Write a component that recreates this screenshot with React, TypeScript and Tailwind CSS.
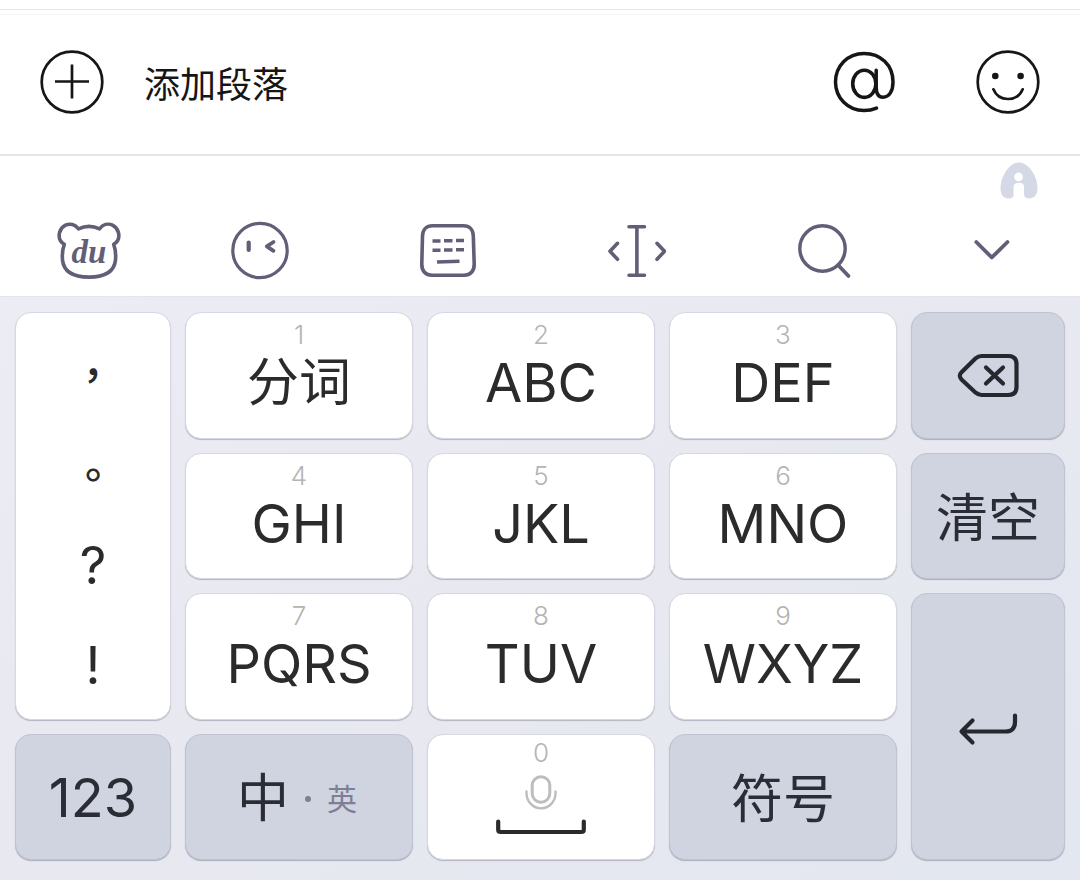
import React from 'react';

interface LetterKeyProps {
  digit: string;
  label: string;
}

const keyBase = 'rounded-2xl border';
const lightKey = `${keyBase} border-[#d6d7e0] shadow-[0_1px_1px_#b4b5c0] bg-white text-[#2b2b2b]`;
const darkKey = `${keyBase} border-[#c0c3d0] shadow-[0_1px_1px_#a9acba] bg-[#d0d3e0] text-[#2a2d35] flex items-center justify-center`;

const LetterKey = ({ digit, label }: LetterKeyProps) => (
  <button className={`${lightKey} flex flex-col items-center pt-2`}>
    <span className="text-[26px] leading-7 font-light text-[#b4b4b4]">{digit}</span>
    <span className="mt-0.5 text-[54px] leading-16">{label}</span>
  </button>
);

const PlusIcon = () => (
  <svg width="64" height="64" viewBox="0 0 64 64" fill="none" stroke="#161616" strokeWidth="2.7">
    <circle cx="32" cy="32" r="30.3" />
    <path d="M15 31.5h34M32 14.5v34" />
  </svg>
);

const AtIcon = () => (
  <svg width="64" height="64" viewBox="0 0 64 64" fill="none" stroke="#161616" strokeLinecap="round">
    <ellipse cx="32.3" cy="33.8" rx="11.6" ry="13.6" strokeWidth="3.6" />
    <path
      d="M44.2 20.3V37c0 6.500 2.300 10.200 6.700 10.200 6.500 0 10.100-6.500 10.100-15.200C61 14.700 48.500 3.400 32 3.400 15.500 3.400 3.500 16 3.500 32S16 60.600 32 60.600c4.600 0 8.600-.8 12.500-2.500"
      strokeWidth="3.5"
    />
  </svg>
);

const SmileIcon = () => (
  <svg width="64" height="64" viewBox="0 0 64 64" fill="none" stroke="#161616" strokeWidth="2.7" strokeLinecap="round">
    <circle cx="32" cy="32" r="30.3" />
    <circle cx="19.300" cy="26" r="3.300" fill="#161616" stroke="none" />
    <circle cx="44.600" cy="26" r="3.300" fill="#161616" stroke="none" />
    <path d="M17.400 39.300C20 45.800 25.500 49 32 49s12-3.200 14.700-9.700" />
  </svg>
);

const BrandIcon = () => (
  <svg width="38" height="37" viewBox="0 0 38 37">
    <path
      d="M19 .5C12 .5 5.500 7.500 2 17 .8 20.500.5 23.500.5 26.500.5 33 4 36.500 8.500 36.500c3.300 0 5.500-1.500 5.500-4.500v-7c0-2 1-3.500 3-4h4c2 .5 3 2 3 4v7c0 3 2.200 4.500 5 4.500 5 0 8.500-3.500 8.500-10 0-3-.5-6-1.500-9.500C32.500 7.500 26 .5 19 .5Z"
      fill="#d5d9e6"
    />
    <circle cx="18.500" cy="15" r="4.400" fill="#fff" />
    <path d="M13.500 36V25.500c0-1.800.6-3.200 1.900-3.700q3.100 1.300 6.200 0c1.300.5 2.400 1.900 2.400 3.700V36Z" fill="#fff" />
  </svg>
);

const BearIcon = () => (
  <svg width="64" height="60" viewBox="0 0 64 60" fill="none" stroke="#625e77" strokeWidth="3.600" strokeLinejoin="round">
    <path d="M21.500 7.800C18 3.500 13 2 8.500 4.200 2.500 7.200.8 14.500 3.300 19.500c1 1.700 2.300 2.800 4 3.800C5.500 28 5 33 5.500 39 6.700 50.500 16.500 56.100 32 56.100S57.300 50.500 58.500 39c.5-6 0-11-1.800-15.700 1.700-1 3-2.100 4-3.800 2.500-5 .8-12.300-5.200-15.300C51 2 46 3.500 42.500 7.800c-6.500-3-14.500-3-21 0Z" />
    <text
      x="32"
      y="42"
      textAnchor="middle"
      fill="#625e77"
      stroke="none"
      className="font-['Liberation_Serif',serif] text-[33px] font-bold italic"
    >
      du
    </text>
  </svg>
);

const WinkIcon = () => (
  <svg width="58" height="60" viewBox="0 0 58 60" fill="none" stroke="#625e77" strokeLinecap="round" strokeLinejoin="round">
    <circle cx="29" cy="29.500" r="27.200" strokeWidth="3.200" />
    <path d="M17.700 21.500v7.500" strokeWidth="4.200" />
    <path d="M42.500 21 35.800 25.300l6.700 4.500" strokeWidth="3.800" />
  </svg>
);

const KeyboardIcon = () => (
  <svg width="56" height="60" viewBox="0 0 56 60" fill="none" stroke="#625e77" strokeWidth="3.600">
    <path d="M12.500 4.800h31c6 0 9.600 3.700 9.800 10 .3 9.500.6 19 .9 28 .2 7.200-3.700 11.400-10.200 11.400H12c-6.500 0-10.400-4.200-10.200-11.400.2-9 .4-18.500.7-28 .2-6.300 4-10 10-10Z" />
    <path d="M12.500 20h8M24 19.800h8.500M36 19.500h8M12.500 29.200h8M24 29h8.500M36 28.700h8" />
    <path d="M17 41l22.500-.8" />
  </svg>
);

const CursorIcon = () => (
  <svg width="58" height="60" viewBox="0 0 58 60" fill="none" stroke="#625e77" strokeWidth="3.600" strokeLinecap="round" strokeLinejoin="round">
    <path d="M21 5.800h15.500M21 54.300h15.500M28.900 6v48M9.500 22.300 2 30.300l7.500 8M49 22.300l7.500 8-7.500 8" />
  </svg>
);

const SearchIcon = () => (
  <svg width="54" height="60" viewBox="0 0 54 60" fill="none" stroke="#625e77" strokeWidth="3.400" strokeLinecap="round">
    <circle cx="24.500" cy="27.500" r="22.700" />
    <path d="M40 44 50.500 55" strokeWidth="3.800" />
  </svg>
);

const CollapseIcon = () => (
  <svg width="36" height="60" viewBox="0 0 36 60" fill="none" stroke="#625e77" strokeWidth="3.800" strokeLinecap="round" strokeLinejoin="round">
    <path d="M2.300 21 17.800 36.500 33.500 21" />
  </svg>
);

const BackspaceIcon = () => (
  <svg width="62" height="46" viewBox="0 0 62 46" fill="none" stroke="#25282e" strokeWidth="4.200" strokeLinecap="round" strokeLinejoin="round">
    <path d="M24.500 3H51c5.500 0 8.500 2.500 8.500 8v23c0 5.500-3 8-8.500 8H24.500c-2.500 0-4-.8-5.800-2.300L4.500 26.500c-2.300-2.300-2.300-5 0-7.300L18.700 5.300C20.500 3.700 22 3 24.500 3Z" />
    <path d="M29 14.500 46 30.500M46 14.500 29 30.500" />
  </svg>
);

const EnterIcon = () => (
  <svg width="60" height="34" viewBox="0 0 60 34" fill="none" stroke="#25282e" strokeWidth="4.200" strokeLinecap="round" strokeLinejoin="round">
    <path d="M57 3.500v6.500c0 6.500-3.500 9.500-9.500 9.500H4.500M14.500 8.500 3.500 19.500l11 11" />
  </svg>
);

const MicIcon = () => (
  <svg width="32" height="36" viewBox="0 0 32 36" fill="none" stroke="#bdbdbd" strokeWidth="2.400" strokeLinecap="round">
    <rect x="7.200" y="1.700" width="17.600" height="25.600" rx="8.800" strokeWidth="3" />
    <path d="M1.500 16.500v1.700C1.500 26.500 8 33.400 16 33.400s14.500-6.900 14.500-15.200v-1.700" />
  </svg>
);

const SpaceIcon = () => (
  <svg width="90" height="16" viewBox="0 0 90 16" fill="none" stroke="#2b2b2b" strokeWidth="4.200" strokeLinecap="round" strokeLinejoin="round">
    <path d="M2.200 2.500v8q0 2.500 2.500 2.500h80.600q2.500 0 2.500-2.500v-8" />
  </svg>
);

const tools = [
  { name: 'Input method', icon: <BearIcon /> },
  { name: 'Emoticons', icon: <WinkIcon /> },
  { name: 'Keyboard layout', icon: <KeyboardIcon /> },
  { name: 'Move cursor', icon: <CursorIcon /> },
  { name: 'Search', icon: <SearchIcon /> },
  { name: 'Hide keyboard', icon: <CollapseIcon /> },
];

const Composer = () => (
  <header className="mt-[9px] border-t border-[#e6e6e6]">
    <div className="mt-1 flex items-center justify-between border-t border-b-2 border-t-[#f6f6f6] border-b-[#e6e6e6] px-10 pt-[35px] pb-10">
      <button className="flex items-center gap-10 text-4xl text-[#161616]">
        <PlusIcon />
        <span className="pt-1.5">添加段落</span>
      </button>
      <div className="flex gap-20">
        <button aria-label="Mention">
          <AtIcon />
        </button>
        <button aria-label="Emoji">
          <SmileIcon />
        </button>
      </div>
    </div>
  </header>
);

const Toolbar = () => (
  <div className="pt-1.5 pb-[15px]">
    <div className="flex justify-end pr-[42px]">
      <BrandIcon />
    </div>
    <div className="mt-[22px] grid grid-cols-[174fr_189fr_188fr_190fr_176fr_36fr] justify-items-start pr-[70px] pl-[57px]">
      {tools.map((tool) => (
        <button key={tool.name} aria-label={tool.name}>
          {tool.icon}
        </button>
      ))}
    </div>
  </div>
);

const Keypad = () => (
  <main className="grid grid-cols-[156fr_228fr_228fr_228fr_154fr] grid-rows-[127px_126px_127px_126px] gap-3.5 border-t border-[#e4e4ec] bg-linear-to-br from-[#ececf4] via-[#e8e9f0] to-[#e3e7f0] px-[15px] pt-[15px] pb-5">
    <div className={`${lightKey} row-span-3 flex flex-col items-stretch justify-center pt-5 font-['Inter','Noto_Sans_CJK_TC',sans-serif]`}>
      <button className="h-25 text-[42px] leading-25 font-medium">，</button>
      <button className="h-25 text-[42px] leading-25 font-medium">。</button>
      <button className="h-25 pb-5 text-[52px] leading-20">?</button>
      <button className="h-25 pb-5 text-[52px] leading-20">!</button>
    </div>
    <button className={`${lightKey} flex flex-col items-center pt-2`}>
      <span className="text-[26px] leading-7 font-light text-[#b4b4b4]">1</span>
      <span className="mt-0.5 text-[52px] leading-16">分词</span>
    </button>
    <LetterKey digit="2" label="ABC" />
    <LetterKey digit="3" label="DEF" />
    <button className={darkKey} aria-label="Backspace">
      <BackspaceIcon />
    </button>

    <LetterKey digit="4" label="GHI" />
    <LetterKey digit="5" label="JKL" />
    <LetterKey digit="6" label="MNO" />
    <button className={`${darkKey} pt-1.5 text-[52px]`}>清空</button>

    <LetterKey digit="7" label="PQRS" />
    <LetterKey digit="8" label="TUV" />
    <LetterKey digit="9" label="WXYZ" />
    <button className={`${darkKey} row-span-2 pt-1`} aria-label="Enter">
      <EnterIcon />
    </button>

    <button className={`${darkKey} text-[54px]`}>123</button>
    <button className={`${darkKey} gap-4 pt-1 pr-1 text-[52px]`}>
      中
      <span className="size-1.5 rounded-full bg-[#7c7f96]" />
      <span className="text-3xl text-[#7c7f96]">英</span>
    </button>
    <button className={`${lightKey} flex flex-col items-center pt-1`} aria-label="Space">
      <span className="text-[26px] leading-7 font-light text-[#b4b4b4]">0</span>
      <span className="mt-2">
        <MicIcon />
      </span>
      <span className="mt-2">
        <SpaceIcon />
      </span>
    </button>
    <button className={`${darkKey} pt-1.5 text-[52px]`}>符号</button>
  </main>
);

const App = () => {
  return (
    <div className="flow-root min-h-screen bg-white font-['Inter','Noto_Sans_CJK_SC',sans-serif] [&_svg]:block">
      <Composer />
      <Toolbar />
      <Keypad />
    </div>
  );
};

export default App;
